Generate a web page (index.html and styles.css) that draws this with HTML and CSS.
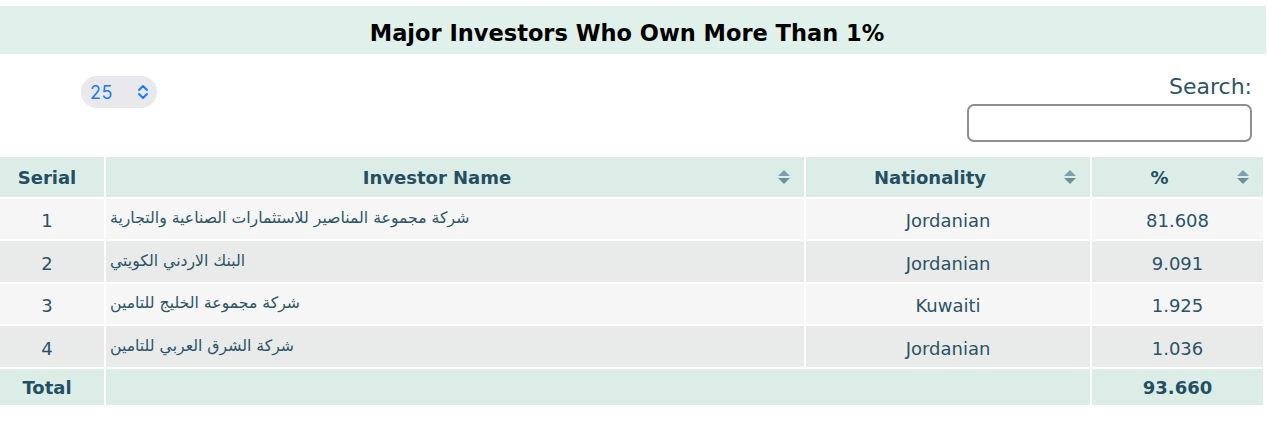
FILE: index.html
```html
<!DOCTYPE html>
<html lang="en">
<head>
<meta charset="utf-8">
<title>Major Investors</title>
<link rel="stylesheet" href="styles.css">
</head>
<body>
<div class="page">
  <h2 class="title">Major Investors Who Own More Than 1%</h2>
  <div class="controls">
    <div class="length">
      <div class="pill">
        <span class="pill-value">25</span>
        <svg class="pill-chev" width="12" height="16" viewBox="0 0 12 16"><path d="M2 6 L6 2 L10 6 M2 10 L6 14 L10 10" fill="none" stroke="#1a7cf5" stroke-width="2" stroke-linecap="round" stroke-linejoin="round"/></svg>
      </div>
    </div>
    <div class="search">
      <label class="search-label" for="q">Search:</label>
      <input id="q" class="search-input" type="text">
    </div>
  </div>
  <table class="grid">
    <colgroup>
      <col class="c-serial"><col class="c-name"><col class="c-nat"><col class="c-pct">
    </colgroup>
    <thead>
      <tr>
        <th class="th-serial"><span class="hcell">Serial</span></th>
        <th class="th-sort"><span class="hcell">Investor Name</span><svg class="sort" width="12" height="16" viewBox="0 0 12 16"><path d="M6 1 L12 7 L0 7 Z" fill="#7f9fac"/><path d="M6 15 L12 9 L0 9 Z" fill="#6f8f9c"/></svg></th>
        <th class="th-sort"><span class="hcell">Nationality</span><svg class="sort" width="12" height="16" viewBox="0 0 12 16"><path d="M6 1 L12 7 L0 7 Z" fill="#7f9fac"/><path d="M6 15 L12 9 L0 9 Z" fill="#6f8f9c"/></svg></th>
        <th class="th-sort"><span class="hcell">%</span><svg class="sort" width="12" height="16" viewBox="0 0 12 16"><path d="M6 1 L12 7 L0 7 Z" fill="#7f9fac"/><path d="M6 15 L12 9 L0 9 Z" fill="#6f8f9c"/></svg></th>
      </tr>
    </thead>
    <tbody>
      <tr class="odd">
        <td class="serial"><span class="cell">1</span></td>
        <td class="name" dir="rtl"><span class="ar">شركة مجموعة المناصير للاستثمارات الصناعية والتجارية</span></td>
        <td class="center"><span class="cell">Jordanian</span></td>
        <td class="center"><span class="cell">81.608</span></td>
      </tr>
      <tr class="even">
        <td class="serial"><span class="cell">2</span></td>
        <td class="name" dir="rtl"><span class="ar">البنك الاردني الكويتي</span></td>
        <td class="center"><span class="cell">Jordanian</span></td>
        <td class="center"><span class="cell">9.091</span></td>
      </tr>
      <tr class="odd">
        <td class="serial"><span class="cell">3</span></td>
        <td class="name" dir="rtl"><span class="ar">شركة مجموعة الخليج للتامين</span></td>
        <td class="center"><span class="cell">Kuwaiti</span></td>
        <td class="center"><span class="cell">1.925</span></td>
      </tr>
      <tr class="even">
        <td class="serial"><span class="cell">4</span></td>
        <td class="name" dir="rtl"><span class="ar">شركة الشرق العربي للتامين</span></td>
        <td class="center"><span class="cell">Jordanian</span></td>
        <td class="center"><span class="cell">1.036</span></td>
      </tr>
    </tbody>
    <tfoot>
      <tr>
        <th class="th-serial"><span class="hcell">Total</span></th>
        <th colspan="2"></th>
        <th class="center"><span class="hcell">93.660</span></th>
      </tr>
    </tfoot>
  </table>
</div>
</body>
</html>
```

FILE: styles.css
```css
html, body {
  margin: 0;
  padding: 0;
  background: #ffffff;
}

body {
  font-family: "DejaVu Sans", Verdana, sans-serif;
  color: #2b5466;
}

.page {
  padding-top: 6px;
  width: 1268px;
}

.title {
  margin: 0;
  width: 1266px;
  height: 48px;
  background: #e0f0ea;
  color: #000000;
  font-size: 22.5px;
  line-height: 26px;
  font-weight: bold;
  display: flex;
  align-items: center;
  justify-content: center;
  padding: 6px 12px 0 0;
  box-sizing: border-box;
}

.controls {
  display: flex;
  justify-content: space-between;
  align-items: flex-start;
  height: 101px;
}

.length {
  padding-top: 22px;
  padding-left: 81px;
}

.pill {
  display: flex;
  align-items: center;
  width: 76px;
  height: 32px;
  box-sizing: border-box;
  background: #e9e9ed;
  border-radius: 16px;
  padding-left: 9px;
  font-family: "Inter", "Liberation Sans", sans-serif;
  font-size: 18px;
  color: #1a7cf5;
}

.pill-value {
  width: 47px;
  letter-spacing: 0.5px;
}

.search {
  display: flex;
  flex-direction: column;
  align-items: flex-end;
  padding-right: 16px;
  padding-top: 20px;
}

.search-label {
  font-size: 22px;
  line-height: 26px;
  color: #2b5466;
}

.search-input {
  margin-top: 4px;
  width: 285px;
  height: 38px;
  box-sizing: border-box;
  border: 2px solid #8e8e8e;
  border-radius: 7px;
  background: #ffffff;
  outline: none;
}

.grid {
  border-collapse: separate;
  border-spacing: 2px;
  margin: 0 0 0 -2px;
  width: 1267px;
  table-layout: fixed;
  font-size: 18px;
  line-height: 22px;
}

.c-serial { width: 104px; }
.c-name { width: 698px; }
.c-nat { width: 284px; }
.c-pct { width: 171px; }

th, td {
  padding: 0;
}

thead th {
  background: #dcede7;
  height: 40px;
  font-weight: bold;
  color: #244f63;
}

.hcell {
  display: inline-block;
  position: relative;
  top: 1px;
}

.th-serial {
  text-align: center;
  padding-right: 10px;
}

.th-sort {
  text-align: center;
  padding-left: 4px;
  padding-right: 40px;
  position: relative;
}

.sort {
  position: absolute;
  right: 14px;
  top: 12px;
}

tbody td {
  height: 40px;
}

tbody tr.even td {
  height: 41px;
}

.cell {
  display: inline-block;
  position: relative;
  top: 2px;
}

tr.odd td {
  background: #f6f6f6;
}

tr.even td {
  background: #e8ebea;
}

td.serial {
  text-align: center;
  padding-right: 10px;
}

td.name {
  unicode-bidi: plaintext;
  text-align: left;
  padding-left: 4px;
}

.ar {
  display: inline-block;
  font-size: 15.7px;
  line-height: 20px;
  position: relative;
  top: -2px;
}

.center {
  text-align: center;
}

tfoot th {
  background: #dcede7;
  height: 36px;
  font-weight: bold;
  color: #244f63;
}
```
